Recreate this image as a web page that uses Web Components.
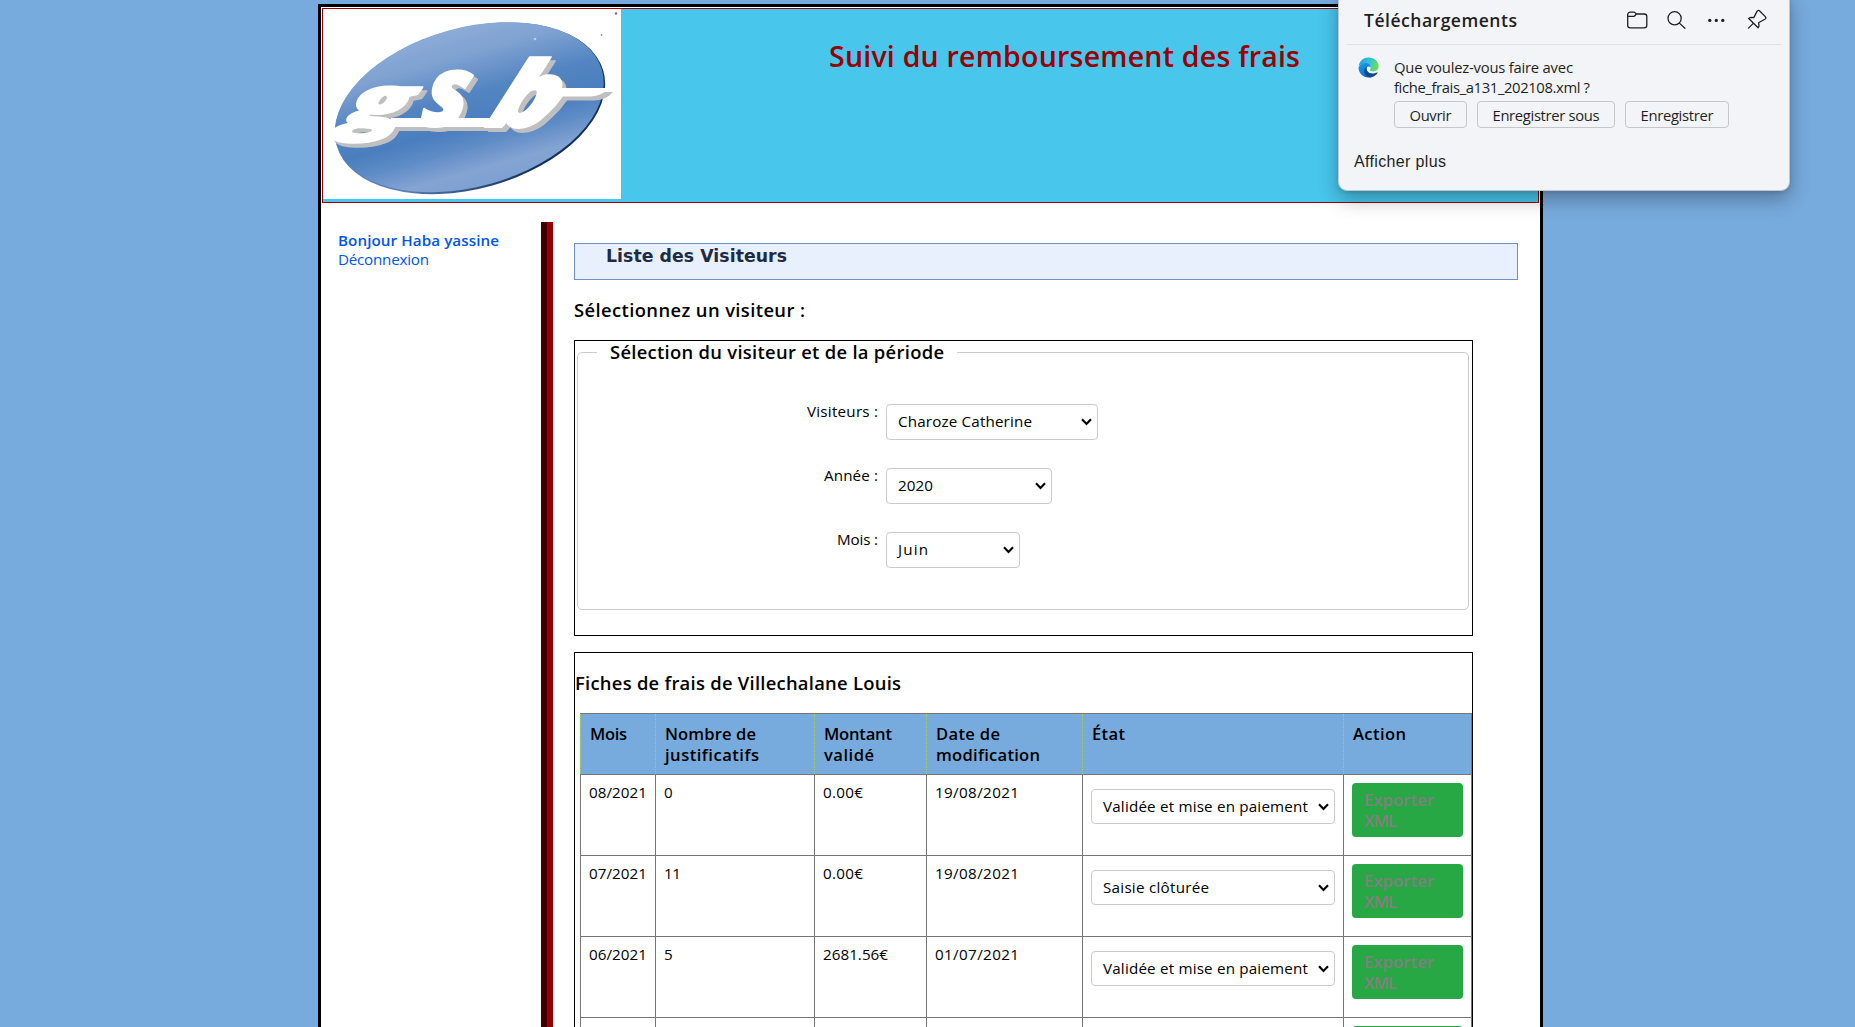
<!DOCTYPE html>
<html lang="fr">
<head>
<meta charset="utf-8">
<title>Suivi du remboursement des frais</title>
<style>
html,body{margin:0;height:1027px;overflow:hidden}
body{background:#77aadd;color:#000;font-family:"Open Sans","Noto Sans",sans-serif;display:flow-root;position:relative}
</style>
</head>
<body>
<gsb-page></gsb-page>
<download-panel></download-panel>
<script>
const define = (name, markup, setup) => customElements.define(name, class extends HTMLElement {
  connectedCallback() {
    if (this.shadowRoot) return;
    const root = this.attachShadow({ mode: 'open' });
    root.innerHTML = typeof markup === 'function' ? markup(this) : markup;
    if (setup) setup(this, root);
  }
});

define('gsb-logo', `<style>:host{display:block;width:298px;height:190px;background:#fff}svg{display:block}</style>
<svg width="298" height="190" viewBox="0 0 298 190">
 <defs>
  <linearGradient id="g" gradientUnits="userSpaceOnUse" x1="0" y1="12" x2="0" y2="185">
   <stop offset="0" stop-color="#8fadd8"/><stop offset=".2" stop-color="#7fa2d1"/><stop offset=".42" stop-color="#5485c2"/><stop offset=".6" stop-color="#4a7ebe"/><stop offset=".72" stop-color="#5f8cc6"/><stop offset=".86" stop-color="#84a4d3"/><stop offset="1" stop-color="#7b9fd0"/>
  </linearGradient>
  <linearGradient id="e" gradientUnits="userSpaceOnUse" x1="90" y1="60" x2="200" y2="170"><stop offset=".3" stop-color="#5d82b5"/><stop offset="1" stop-color="#12305c"/></linearGradient>
 </defs>
 <ellipse cx="147" cy="99.300" rx="138.500" ry="80.300" fill="url(#e)" transform="rotate(-15.600 147 99.300)"/>
 <ellipse cx="146.300" cy="98.200" rx="137.800" ry="79.500" fill="url(#g)" transform="rotate(-15.600 146.300 98.200)"/>
 <g fill="#fff" style="filter:drop-shadow(4px 4px 0 #bfbfc1)">
  <g font-family="Open Sans" font-style="italic" font-weight="800" stroke="#fff" stroke-width="2" stroke-linejoin="round">
   <text transform="translate(18 117) skewX(-20) scale(1.560 1)" font-size="70">g</text>
   <text transform="translate(96 117) skewX(-12) scale(1.020 1.120)" font-size="88">s</text>
   <text transform="translate(161 118) skewX(-21) scale(1.200 1)" font-size="92">b</text>
  </g>
  <path d="M68 109H172V118H62Z"/>
  <path d="M60 78.500H91L84 89H64Z"/>
  <path d="M217 79H286Q279 87 268 87.500H240Q226 108 208 115L196 108Q212 100 214 88Z"/>
 </g>
 <circle cx="293" cy="4.500" r="1.300" fill="#777"/><circle cx="278.500" cy="26" r=".9" fill="#999"/><circle cx="212" cy="30" r="1.300" fill="#b9d0ea"/>
</svg>`);

define('gsb-header', `<style>
:host{display:flex;align-items:flex-start;box-sizing:border-box;height:195px;margin:1px;border:1px solid #900;background:#48c6ec;flex:none}
h1{margin:27px 0 0 208px;font-size:28.500px;line-height:40px;font-weight:650;color:#900}
</style><gsb-logo></gsb-logo><h1><fit-text w="471">Suivi du remboursement des frais</fit-text></h1>`);

define('user-menu', `<style>
:host{display:flex;flex-direction:column;width:203px;padding:28px 0 0 17px;font-size:15.200px;line-height:19px;color:#05e}
b{font-weight:650}
</style><b><fit-text w="161">Bonjour Haba yassine</fit-text></b><span><fit-text w="91">Déconnexion</fit-text></span>`);

define('page-title', `<style>
:host{display:block;box-sizing:border-box;width:944px;height:37px;margin-top:21px;border:1px solid #6f8fc9;background:#e8f0fe;color:#1f2a44;padding-left:31px;font:bold 17.300px/24px "DejaVu Sans",sans-serif}
</style><fit-text w="181"><slot></slot></fit-text>`);

define('section-heading', `<style>:host{display:block;margin:17px 0;font-size:18.400px;line-height:26px;font-weight:600}</style><slot></slot>`);

define('outline-panel', `<style>:host{display:flow-root;box-sizing:border-box;width:899px;border:1px solid #000}</style><slot></slot>`);

define('select-box', `<style>
:host{display:flex;align-items:center;justify-content:space-between;box-sizing:border-box;border:1px solid #ccc;border-radius:4px;background:#fff;padding:0 4px 2px 11px;font-size:15.200px;line-height:20px;height:36px}
svg{flex:none;margin-top:2px}
</style><slot></slot><svg width="13" height="10" viewBox="0 0 13 10"><path d="M2 2.200 6.500 6.900 11 2.200" fill="none" stroke="#000" stroke-width="2.100"/></svg>`);

define('field-row', el => `<style>
:host{display:flex;align-items:flex-start;height:36px;margin-bottom:28px}
label{width:281px;margin:-2px 8px 0 0;text-align:right;font-size:15.200px;line-height:18px}
select-box{width:${el.getAttribute('width')}px}
</style><label><fit-text w="${el.getAttribute('lw')}">${el.getAttribute('label')}</fit-text></label><select-box><fit-text w="${el.getAttribute('vw')}">${el.getAttribute('value')}</fit-text></select-box>`);

define('visitor-form', `<style>
:host{display:block;height:294px}
fieldset{box-sizing:border-box;height:269px;margin:0 3px 0 2px;padding:41px 0 0 19px;border:1px solid #ccc;border-radius:5px;min-width:0}
legend{padding:0 13px;font-size:18.400px;line-height:22px;font-weight:600}
</style><fieldset><legend><fit-text w="334">Sélection du visiteur et de la période</fit-text></legend>
<field-row label="Visiteurs :" lw="71" value="Charoze Catherine" vw="134" width="212"></field-row>
<field-row label="Année :" lw="54" value="2020" vw="35" width="166"></field-row>
<field-row label="Mois :" lw="41" value="Juin" vw="30" width="134"></field-row></fieldset>`);

define('export-button', `<style>
:host{display:block;box-sizing:border-box;width:111px;height:54px;margin:8px 0 0 8px;padding:6px 0 0 12px;border-radius:4px;background:#28a745;color:#808080;font-size:16.600px;line-height:21px;font-weight:600}
span{display:block}
</style><slot></slot>`);

const COLS = '75px 159px 112px 156px 261px 128px';
define('expense-head', `<style>
:host{display:grid;grid-template-columns:${COLS};height:60px;border:1px solid #777;border-width:1px 1px 1px 0;background:#77aadd;font-size:16.600px;line-height:21px;font-weight:650}
div{padding:9px 0 0 9px;border-left:1px dotted #b2d235}
div:first-child{border-left:1px solid #777;padding-left:8px}
fit-text{display:block}
</style>
<div><fit-text w="37">Mois</fit-text></div>
<div><fit-text w="91">Nombre de</fit-text><fit-text w="94">justificatifs</fit-text></div>
<div><fit-text w="68">Montant</fit-text><fit-text w="50">validé</fit-text></div>
<div><fit-text w="64">Date de</fit-text><fit-text w="104">modification</fit-text></div>
<div><fit-text w="33">État</fit-text></div>
<div><fit-text w="53">Action</fit-text></div>`);

define('expense-row', el => {
  const a = n => el.getAttribute(n) || '';
  const cell = (n, w) => `<div class="t">${a(n) ? `<fit-text w="${w}">${a(n)}</fit-text>` : ''}</div>`;
  return `<style>
:host{display:grid;grid-template-columns:${COLS};height:80px;border-bottom:1px solid #777;border-right:1px solid #777;font-size:15.200px;line-height:20px}
div{border-left:1px solid #777;box-sizing:border-box}
.t{padding:7px 0 0 8px}
select-box{width:244px;height:35px;margin:14px 0 0 8px}
.l{display:block}
</style>${cell('mois', 58)}${cell('nb', a('nw'))}${cell('montant', a('mw'))}${cell('date', 84)}
<div><select-box>${a('etat') ? `<fit-text w="${a('ew')}">${a('etat')}</fit-text>` : '<span></span>'}</select-box></div>
<div><export-button>${a('mois') ? '<fit-text class="l" w="70">Exporter</fit-text><fit-text class="l" w="33">XML</fit-text>' : ''}</export-button></div>`;
});

define('expense-table', `<style>:host{display:block;width:892px;margin-left:5px}</style>
<expense-head></expense-head>
<expense-row mois="08/2021" nb="0" nw="9" montant="0.00€" mw="40" date="19/08/2021" etat="Validée et mise en paiement" ew="205"></expense-row>
<expense-row mois="07/2021" nb="11" nw="17" montant="0.00€" mw="40" date="19/08/2021" etat="Saisie clôturée" ew="106"></expense-row>
<expense-row mois="06/2021" nb="5" nw="9" montant="2681.56€" mw="65" date="01/07/2021" etat="Validée et mise en paiement" ew="205"></expense-row>
<expense-row></expense-row>`);

define('main-content', `<style>
:host{display:flow-root;flex:1;margin-top:19px;padding-left:21px;border-left:6px solid #900}
.second{margin-top:16px}
</style>
<page-title>Liste des Visiteurs</page-title>
<section-heading><fit-text w="231">Sélectionnez un visiteur :</fit-text></section-heading>
<outline-panel><visitor-form></visitor-form></outline-panel>
<outline-panel class="second"><section-heading><fit-text w="326">Fiches de frais de Villechalane Louis</fit-text></section-heading><expense-table></expense-table></outline-panel>`);

define('gsb-page', `<style>
:host{display:flex;flex-direction:column;box-sizing:border-box;width:1225px;height:1023px;margin:4px 0 0 318px;border:3px solid #000;border-bottom:0;background:#fff;overflow:hidden}
.body{display:flex;flex:1;margin-top:-1px}
.stripe{width:6px;margin-top:19px;background:#400000}
</style><gsb-header></gsb-header><div class="body"><user-menu></user-menu><div class="stripe"></div><main-content></main-content></div>`);

define('panel-button', `<style>
:host{display:flex;align-items:center;justify-content:center;box-sizing:border-box;height:27px;border:1px solid #c6c7cb;border-radius:4px;font-size:14.800px;line-height:20px}
</style><slot></slot>`);

define('edge-icon', `<style>:host{display:block;width:21px;height:21px;margin-top:-1px}svg{display:block}</style>
<svg width="21" height="21" viewBox="0 0 21 21"><defs>
<linearGradient id="a" x1="0" y1=".2" x2="1" y2=".5"><stop offset="0" stop-color="#1f9de0"/><stop offset=".5" stop-color="#33c3d8"/><stop offset="1" stop-color="#66e04e"/></linearGradient>
<linearGradient id="b" x1="0" y1="0" x2=".5" y2="1"><stop offset="0" stop-color="#1ba0e2"/><stop offset="1" stop-color="#0c6ccb"/></linearGradient></defs>
<path d="M.7 9C1.500 3.500 5.700.4 10.500.4c6 0 10.100 4.400 10.100 8.700 0 3.300-2.300 5.300-5.200 5.300-2.400 0-4-.9-3.600-1.700.7-.8.9-1.400.9-2.300C12.700 8 10.500 6.500 7.500 6.500 4.500 6.500 2 7.500.7 9Z" fill="url(#a)"/>
<path d="M.5 10.300C1.500 7.500 4.500 6 7.700 6c2.600 0 5 1.600 5 4.400-1-1.700-4.800-1.300-4.800 2.500 0 3.700 3.400 7 6.900 6.800-1.200.6-2.800.9-4.300.9C5 20.600.3 16 .5 10.300Z" fill="url(#b)"/>
<path d="M9.300 9.600C7 10.500 5.900 12.700 6.200 15c.4 3 3.400 5.400 6.800 5.300 3-.5 5.300-2.300 6.500-4.400.2-.5-.1-.7-.5-.5-4.500 2-8.600.9-9.900-2-.6-1.400-.5-2.700.2-3.800Z" fill="#114a8b"/>
</svg>`);

define('download-panel', `<style>
:host{position:absolute;left:1338px;top:-8px;box-sizing:border-box;width:452px;height:199px;padding-top:8px;background:#f3f4f8;border:1px solid #bfc6d0;border-radius:9px;box-shadow:0 8px 20px rgba(0,0,0,.3),0 1px 4px rgba(0,0,0,.12);color:#1f1f1f;display:flex;flex-direction:column}
header{display:flex;justify-content:space-between;height:43px;margin:0 7px 0 8px;border-bottom:1px solid #e0e1e5;padding:0 13px 0 17px;box-sizing:content-box}
h2{margin:6px 0 0;font-size:17.600px;line-height:26px;font-weight:600}
nav{display:flex}
svg{fill:none;stroke:#1f1f1f;stroke-width:1.300;stroke-linecap:round;stroke-linejoin:round}
.item{display:flex;margin:13px 0 0 19px;gap:15px}
p{margin:-1px 0 0;font-size:14.800px;line-height:20px;height:44px}
p fit-text{display:block}
.buttons{display:flex;gap:10px}
footer{font:16px/20px "Liberation Sans",sans-serif;margin:24px 0 0 15px}
</style>
<header><h2><fit-text w="153">Téléchargements</fit-text></h2>
<nav><svg width="142" height="40" viewBox="0 0 142 40">
<path d="M.8 14a2.600 2.600 0 0 1 2.600-2.600h3.300q1 0 1.700.8l1.100 1.100h7.800a2.600 2.600 0 0 1 2.600 2.600v8.600a2.600 2.600 0 0 1-2.600 2.600H3.400a2.600 2.600 0 0 1-2.600-2.600ZM.8 15.600h5.800q1 0 1.600-.8l1.300-1.500" transform="translate(-.1 -.3)"/>
<circle cx="47.600" cy="17.300" r="6.600"/><path d="m52.400 22.100 5.500 5.200"/>
<g fill="#1f1f1f" stroke="none"><circle cx="82.800" cy="19.400" r="1.650"/><circle cx="89.300" cy="19.400" r="1.650"/><circle cx="95.800" cy="19.400" r="1.650"/></g>
<path d="m121.500 27.600 5-5m-4-3.900 8.600 8.500q1.200-1.200.9-2.800l-.5-2.200 6.400-3.400q1.800-1.200.4-2.700l-5.600-5.600q-1.500-1.400-2.700.4l-3.200 6.200-2.200-.2q-1.500 0-3 1.200" transform="translate(0 -.5)"/>
</svg></nav></header>
<div class="item"><edge-icon></edge-icon><div><p><fit-text w="179">Que voulez-vous faire avec</fit-text><fit-text w="196">fiche_frais_a131_202108.xml ?</fit-text></p>
<div class="buttons"><panel-button style="width:73px"><fit-text w="42">Ouvrir</fit-text></panel-button><panel-button style="width:138px"><fit-text w="107">Enregistrer sous</fit-text></panel-button><panel-button style="width:104px"><fit-text w="73">Enregistrer</fit-text></panel-button></div></div></div>
<footer><fit-text w="92">Afficher plus</fit-text></footer>`);

/* Tracks its text so that the line occupies the requested width. */
define('fit-text', `<style>:host{display:inline-block;white-space:nowrap;vertical-align:top}span{display:inline-block}</style><span><slot></slot></span>`, (el, root) => {
  const span = root.querySelector('span');
  let source = el.textContent.trim();
  if (!source) {
    const slot = el.querySelector('slot');
    if (slot) source = slot.assignedNodes().map(n => n.textContent).join('').trim();
  }
  const gap = (Number(el.getAttribute('w')) - span.getBoundingClientRect().width) / Math.max(1, source.length - 1);
  if (source.length > 1) { span.style.letterSpacing = gap.toFixed(3) + 'px'; span.style.marginRight = (-gap).toFixed(3) + 'px'; }
});
</script>
</body>
</html>
